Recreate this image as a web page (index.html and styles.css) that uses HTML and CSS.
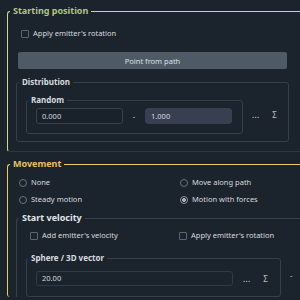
FILE: index.html
```html
<!DOCTYPE HTML>
<html>
<head>
<meta charset="utf-8">
<title>Emitter</title>
<link rel="stylesheet" href="styles.css">
</head>
<body>
	<fieldset class="group start">
		<legend>Starting position</legend>
		<label class="check first"><span class="box"></span>Apply emitter's rotation</label>
		<button class="btn">Point from path</button>
		<fieldset class="sub dist">
			<legend>Distribution</legend>
			<div class="row dist-row">
				<fieldset class="sub random">
					<legend>Random</legend>
					<div class="range">
						<div class="field">0.000</div>
						<span class="dash">-</span>
						<div class="field active">1.000</div>
					</div>
				</fieldset>
				<span class="more">...</span>
				<span class="sigma">Σ</span>
			</div>
		</fieldset>
	</fieldset>

	<fieldset class="group move">
		<legend>Movement</legend>
		<div class="radios">
			<label class="radio"><span class="dot"></span>None</label>
			<label class="radio"><span class="dot"></span>Move along path</label>
			<label class="radio"><span class="dot"></span>Steady motion</label>
			<label class="radio"><span class="dot on"></span>Motion with forces</label>
		</div>
		<fieldset class="velocity">
			<legend>Start velocity</legend>
			<div class="checks">
				<label class="check"><span class="box"></span>Add emitter's velocity</label>
				<label class="check"><span class="box"></span>Apply emitter's rotation</label>
			</div>
			<div class="row sphere-row">
				<fieldset class="sub sphere">
					<legend>Sphere / 3D vector</legend>
					<div class="range">
						<div class="field wide">20.00</div>
						<span class="more">...</span>
						<span class="sigma">Σ</span>
					</div>
				</fieldset>
				<span class="dash2">-</span>
			</div>
		</fieldset>
	</fieldset>
</body>
</html>
```

FILE: styles.css
```css
html, body{
	margin: 0;
	background: #1b232d;
	overflow: hidden;
}
body{
	width: 300px;
	height: 300px;
	box-sizing: border-box;
	padding-top: 5px;
	font-family: "Noto Sans", "Open Sans", sans-serif;
	font-size: 7.5px;
	color: #d8dbdf;
}
fieldset{
	margin: 0;
	padding: 0;
	min-inline-size: 0;
	box-sizing: border-box;
}
legend{
	padding: 0 3px;
	font-weight: bold;
}

/* top level groups, they run on past the right edge */
.group{
	margin-left: 7px;
	border: 1px solid;
	border-right: none;
	border-radius: 3px 0 0 3px;
}
.group > legend{
	font-size: 9px;
	line-height: 12px;
	margin-left: -6px;
}
.start{
	border-color: #c9d98f;
	border-bottom-color: #2c3944;
	padding: 0 0 9px 8px;
}
.start > legend{
	color: #b3c77c;
}
.move{
	margin-top: 6px;
	border-color: #ecca67;
	border-bottom: none;
	padding: 0 0 0 8px;
}
.move > legend{
	color: #e8c25c;
}

/* checkbox and radio */
.check, .radio{
	display: flex;
	align-items: center;
	gap: 4px;
	height: 9px;
	line-height: 9px;
	white-space: nowrap;
}
.check.first{
	margin: 12px 0 0 5px;
}
.box{
	width: 6px;
	height: 6px;
	border: 1px solid #5b656e;
	border-radius: 1px;
}
.dot{
	width: 6px;
	height: 6px;
	border: 1px solid #6b737b;
	border-radius: 50%;
}
.dot.on{
	border-color: #8a9097;
	background: radial-gradient(circle, #a6abb0 0 1.6px, transparent 2.2px);
}

.btn{
	display: block;
	margin: 14px 0 0 2px;
	width: 269px;
	height: 17px;
	background: #4e5a65;
	border: none;
	border-radius: 2px;
	color: #dde1e5;
	font: inherit;
	padding: 0;
}

/* sub groups */
.sub{
	border: 1px solid #33414c;
	border-radius: 3px;
}
.sub > legend{
	font-size: 8px;
	line-height: 10px;
	color: #d8dde0;
	margin-left: -8px;
}
.dist{
	margin-top: 8px;
	width: 273px;
	padding: 0 0 7px 9px;
}
.dist > legend{
	margin-left: -7px;
}
.row{
	display: flex;
	align-items: center;
}
.dist-row{
	margin-top: 8px;
}
.random{
	width: 217px;
	padding: 3px 9px 9px 9px;
}
.range{
	display: flex;
	align-items: center;
}
.field{
	box-sizing: border-box;
	width: 87px;
	height: 16px;
	line-height: 14px;
	padding-left: 5px;
	border: 1px solid #36434e;
	border-radius: 3px;
	background: #19212b;
}
.field.active{
	background: #383f52;
	border-color: #383f52;
}
.field.wide{
	width: 197px;
	height: 15px;
	line-height: 13px;
	border-color: #2f3c47;
	background: #1b232d;
}
.dash{
	width: 22px;
	text-align: center;
}
.more{
	margin-left: 9px;
	font-size: 8px;
	color: #e2e5e8;
	letter-spacing: 0.3px;
}
.sigma{
	margin-left: 13px;
	font-size: 8px;
	color: #b9bdc1;
}

/* movement */
.radios{
	display: grid;
	grid-template-columns: 161px auto;
	row-gap: 8px;
	margin: 8px 0 0 3px;
}
.velocity{
	margin-top: 8px;
	border: 1px solid #34424d;
	border-right: none;
	border-bottom: none;
	border-radius: 3px 0 0 0;
	padding: 0 0 0 9px;
}
.velocity > legend{
	font-size: 9px;
	line-height: 12px;
	color: #e3e7ea;
	margin-left: -7px;
}
.checks{
	display: grid;
	grid-template-columns: 149px auto;
	margin: 7px 0 0 4px;
}
.sphere-row{
	margin-top: 13px;
}
.sphere{
	width: 255px;
	padding: 8px 8px 10px 9px;
}
.sphere .more{
	margin-left: 10px;
}
.sphere .sigma{
	margin-left: 13px;
}
.dash2{
	margin-left: 9px;
}
```
